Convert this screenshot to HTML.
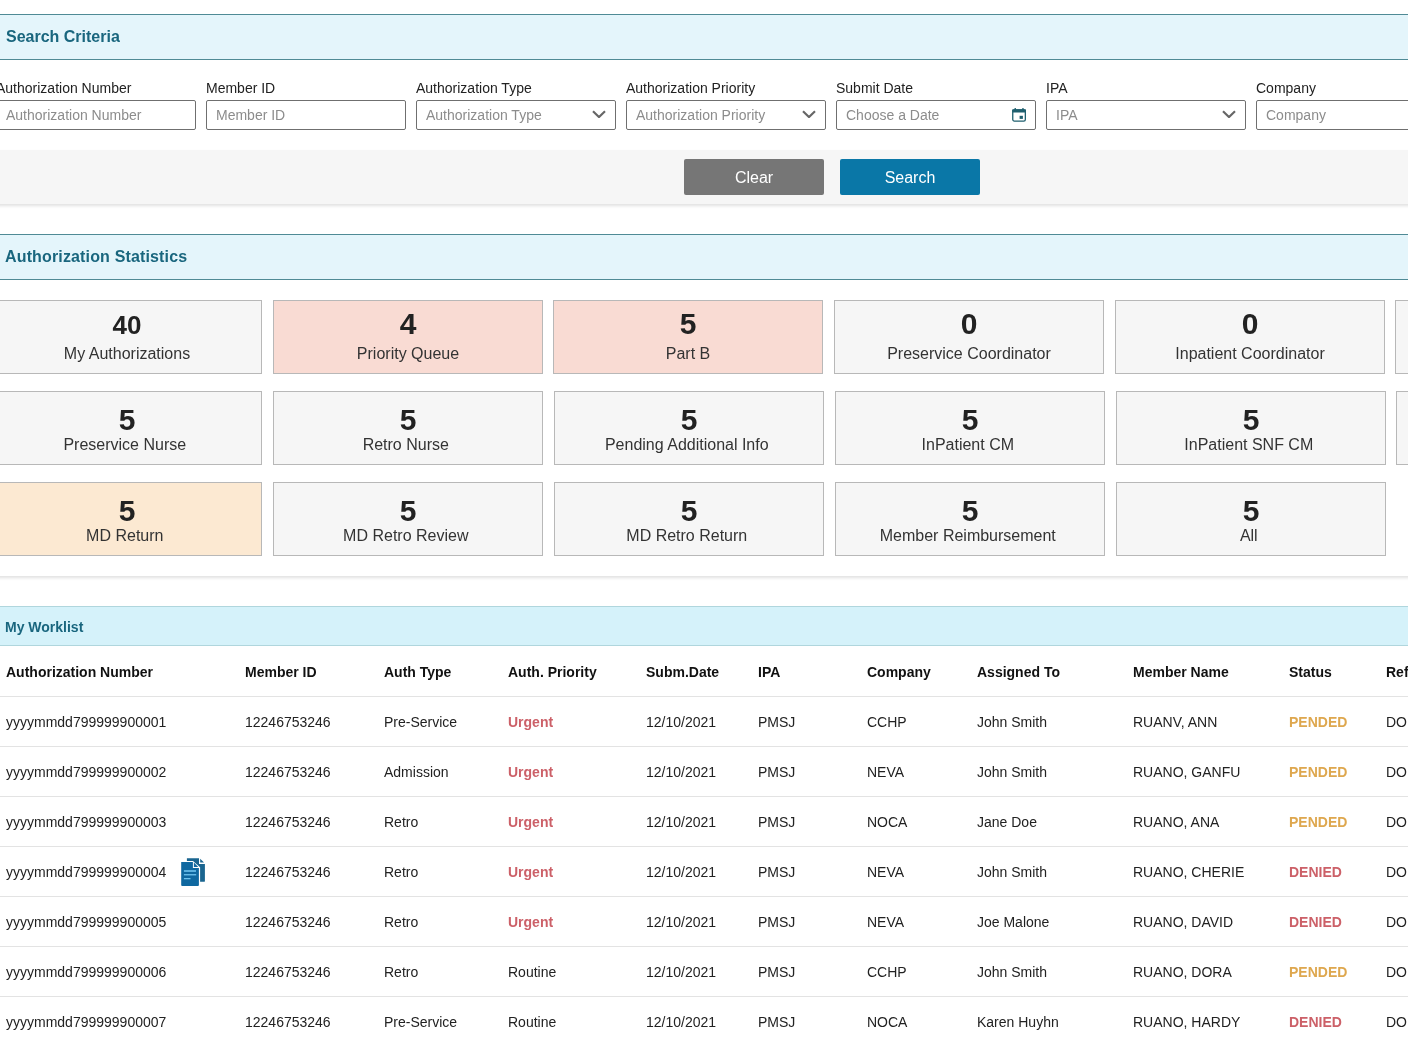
<!DOCTYPE html><html><head><meta charset="utf-8"><title>Authorizations</title><style>

html,body{margin:0;padding:0;width:1408px;height:1041px;overflow:hidden;background:#fff;font-family:"Liberation Sans", sans-serif;}
.abs{position:absolute;white-space:nowrap;}
.hdr{position:absolute;left:-10px;width:1430px;box-sizing:border-box;}
.h1{top:14px;height:46px;background:#e4f5fb;border-top:1px solid #4f8a95;border-bottom:1px solid #4f8a95;}
.h2{top:234px;height:46px;background:#e4f5fb;border-top:1px solid #4f8a95;border-bottom:1px solid #4f8a95;}
.h3{top:606px;height:40px;background:#d5f2fa;border-top:1px solid #b0d6dd;border-bottom:1px solid #b0d6dd;}
.htxt{color:#19667e;font-weight:bold;}
.lbl{font-size:14px;line-height:16px;color:#222;}
.inp{position:absolute;top:100px;width:200px;height:30px;box-sizing:border-box;border:1px solid #6f6f6f;border-radius:2px;background:#fff;}
.ph{position:absolute;left:9px;top:6px;font-size:14px;line-height:16px;color:#8c8c8c;white-space:nowrap;}
.band{position:absolute;left:-10px;width:1430px;top:150px;height:54px;background:#f6f6f6;box-shadow:0 2px 3px rgba(0,0,0,0.12);}
.btn{position:absolute;top:159px;width:140px;height:36px;border-radius:2px;color:#fff;font-size:16px;line-height:38px;text-align:center;}
.card{position:absolute;width:270px;height:74px;box-sizing:border-box;border:1px solid #b8b8b8;background:#f6f6f6;}
.num{position:absolute;left:0;width:100%;text-align:center;font-weight:bold;font-size:30px;line-height:30px;color:#222;}
.clbl{position:absolute;left:0;width:100%;text-align:center;font-size:16px;line-height:18px;color:#333;white-space:pre;}
.th{position:absolute;top:664px;font-size:14px;line-height:16px;font-weight:bold;color:#111;white-space:nowrap;}
.td{position:absolute;font-size:14px;line-height:16px;color:#222;white-space:nowrap;}
.line{position:absolute;left:-10px;width:1430px;height:1px;background:#e3e3e3;}
.red{color:#cc6068;font-weight:bold;}
.org{color:#dea74e;font-weight:bold;}

</style></head><body><div id="wrap" style="position:absolute;left:0;top:0;width:1408px;height:1041px;overflow:hidden;will-change:transform;">
<div class="hdr h1"></div>
<div class="abs htxt" style="left:6px;top:28px;font-size:16px;line-height:18px;">Search Criteria</div>
<div class="abs lbl" style="left:-4px;top:80px;">Authorization Number</div>
<div class="inp" style="left:-4px;"><div class="ph">Authorization Number</div></div>
<div class="abs lbl" style="left:206px;top:80px;">Member ID</div>
<div class="inp" style="left:206px;"><div class="ph">Member ID</div></div>
<div class="abs lbl" style="left:416px;top:80px;">Authorization Type</div>
<div class="inp" style="left:416px;"><div class="ph">Authorization Type</div><svg class="abs" style="left:175px;top:7px" width="16" height="10" viewBox="0 0 16 10"><path d="M1.0 3.2 L7 9.1 L13 3.2" fill="none" stroke="#666" stroke-width="2.1" stroke-linecap="butt"/></svg></div>
<div class="abs lbl" style="left:626px;top:80px;">Authorization Priority</div>
<div class="inp" style="left:626px;"><div class="ph">Authorization Priority</div><svg class="abs" style="left:175px;top:7px" width="16" height="10" viewBox="0 0 16 10"><path d="M1.0 3.2 L7 9.1 L13 3.2" fill="none" stroke="#666" stroke-width="2.1" stroke-linecap="butt"/></svg></div>
<div class="abs lbl" style="left:836px;top:80px;">Submit Date</div>
<div class="inp" style="left:836px;"><div class="ph">Choose a Date</div><svg class="abs" style="left:174px;top:7px" width="16" height="16" viewBox="0 0 16 16"><rect x="1.75" y="1.9" width="12.6" height="11.15" rx="1.6" fill="none" stroke="#1f5f6e" stroke-width="1.3"/><rect x="1.1" y="1.2" width="13.9" height="3.2" rx="0.8" fill="#1f5f6e"/><rect x="3.5" y="0.1" width="1.5" height="2" fill="#1f5f6e"/><rect x="11.2" y="0.1" width="1.5" height="2" fill="#1f5f6e"/><rect x="8.6" y="7.8" width="3.3" height="3.1" fill="#1f5f6e"/></svg></div>
<div class="abs lbl" style="left:1046px;top:80px;">IPA</div>
<div class="inp" style="left:1046px;"><div class="ph">IPA</div><svg class="abs" style="left:175px;top:7px" width="16" height="10" viewBox="0 0 16 10"><path d="M1.0 3.2 L7 9.1 L13 3.2" fill="none" stroke="#666" stroke-width="2.1" stroke-linecap="butt"/></svg></div>
<div class="abs lbl" style="left:1256px;top:80px;">Company</div>
<div class="inp" style="left:1256px;"><div class="ph">Company</div></div>
<div class="band"></div>
<div class="btn" style="left:684px;background:#767676;">Clear</div>
<div class="btn" style="left:840px;background:#0a77a7;">Search</div>
<div class="band" style="top:280px;height:296px;background:#fff;"></div>
<div class="hdr h2"></div>
<div class="abs htxt" style="left:5px;top:248px;font-size:16px;line-height:18px;letter-spacing:0.15px;">Authorization Statistics</div>
<div class="card" style="left:-8px;top:300px;background:#f6f6f6;"><div class="num" style="top:11px;font-size:26px;line-height:26px;">40</div><div class="clbl" style="top:44px;">My Authorizations</div></div>
<div class="card" style="left:273px;top:300px;background:#f9dbd3;"><div class="num" style="top:8px;">4</div><div class="clbl" style="top:44px;">Priority Queue</div></div>
<div class="card" style="left:553px;top:300px;background:#f9dbd3;"><div class="num" style="top:8px;">5</div><div class="clbl" style="top:44px;">Part B</div></div>
<div class="card" style="left:834px;top:300px;background:#f6f6f6;"><div class="num" style="top:8px;">0</div><div class="clbl" style="top:44px;">Preservice Coordinator</div></div>
<div class="card" style="left:1115px;top:300px;background:#f6f6f6;"><div class="num" style="top:8px;">0</div><div class="clbl" style="top:44px;">Inpatient Coordinator</div></div>
<div class="card" style="left:1395px;top:300px;background:#f6f6f6;"><div class="num" style="top:8px;"></div><div class="clbl" style="top:44px;"></div></div>
<div class="card" style="left:-8px;top:391px;background:#f6f6f6;"><div class="num" style="top:13px;">5</div><div class="clbl" style="top:44px;">Preservice Nurse </div></div>
<div class="card" style="left:273px;top:391px;background:#f6f6f6;"><div class="num" style="top:13px;">5</div><div class="clbl" style="top:44px;">Retro Nurse </div></div>
<div class="card" style="left:554px;top:391px;background:#f6f6f6;"><div class="num" style="top:13px;">5</div><div class="clbl" style="top:44px;">Pending Additional Info </div></div>
<div class="card" style="left:835px;top:391px;background:#f6f6f6;"><div class="num" style="top:13px;">5</div><div class="clbl" style="top:44px;">InPatient CM </div></div>
<div class="card" style="left:1116px;top:391px;background:#f6f6f6;"><div class="num" style="top:13px;">5</div><div class="clbl" style="top:44px;">InPatient SNF CM </div></div>
<div class="card" style="left:1396px;top:391px;background:#f6f6f6;"><div class="num" style="top:13px;"></div><div class="clbl" style="top:44px;"></div></div>
<div class="card" style="left:-8px;top:482px;background:#fce9d2;"><div class="num" style="top:13px;">5</div><div class="clbl" style="top:44px;">MD Return </div></div>
<div class="card" style="left:273px;top:482px;background:#f6f6f6;"><div class="num" style="top:13px;">5</div><div class="clbl" style="top:44px;">MD Retro Review </div></div>
<div class="card" style="left:554px;top:482px;background:#f6f6f6;"><div class="num" style="top:13px;">5</div><div class="clbl" style="top:44px;">MD Retro Return </div></div>
<div class="card" style="left:835px;top:482px;background:#f6f6f6;"><div class="num" style="top:13px;">5</div><div class="clbl" style="top:44px;">Member Reimbursement </div></div>
<div class="card" style="left:1116px;top:482px;background:#f6f6f6;"><div class="num" style="top:13px;">5</div><div class="clbl" style="top:44px;">All </div></div>
<div class="hdr h3"></div>
<div class="abs htxt" style="left:5px;top:619px;font-size:14px;line-height:16px;">My Worklist</div>
<div class="th" style="left:6px;">Authorization Number</div>
<div class="th" style="left:245px;">Member ID</div>
<div class="th" style="left:384px;">Auth Type</div>
<div class="th" style="left:508px;">Auth. Priority</div>
<div class="th" style="left:646px;">Subm.Date</div>
<div class="th" style="left:758px;">IPA</div>
<div class="th" style="left:867px;">Company</div>
<div class="th" style="left:977px;">Assigned To</div>
<div class="th" style="left:1133px;">Member Name</div>
<div class="th" style="left:1289px;">Status</div>
<div class="th" style="left:1386px;">Ref</div>
<div class="line" style="top:696px;"></div>
<div class="line" style="top:746px;"></div>
<div class="line" style="top:796px;"></div>
<div class="line" style="top:846px;"></div>
<div class="line" style="top:896px;"></div>
<div class="line" style="top:946px;"></div>
<div class="line" style="top:996px;"></div>
<div class="td" style="left:6px;top:714px;">yyyymmdd799999900001</div>
<div class="td" style="left:245px;top:714px;">12246753246</div>
<div class="td" style="left:384px;top:714px;">Pre-Service</div>
<div class="td red" style="left:508px;top:714px;">Urgent</div>
<div class="td" style="left:646px;top:714px;">12/10/2021</div>
<div class="td" style="left:758px;top:714px;">PMSJ</div>
<div class="td" style="left:867px;top:714px;">CCHP</div>
<div class="td" style="left:977px;top:714px;">John Smith</div>
<div class="td" style="left:1133px;top:714px;">RUANV, ANN</div>
<div class="td org" style="left:1289px;top:714px;">PENDED</div>
<div class="td" style="left:1386px;top:714px;">DO</div>
<div class="td" style="left:6px;top:764px;">yyyymmdd799999900002</div>
<div class="td" style="left:245px;top:764px;">12246753246</div>
<div class="td" style="left:384px;top:764px;">Admission</div>
<div class="td red" style="left:508px;top:764px;">Urgent</div>
<div class="td" style="left:646px;top:764px;">12/10/2021</div>
<div class="td" style="left:758px;top:764px;">PMSJ</div>
<div class="td" style="left:867px;top:764px;">NEVA</div>
<div class="td" style="left:977px;top:764px;">John Smith</div>
<div class="td" style="left:1133px;top:764px;">RUANO, GANFU</div>
<div class="td org" style="left:1289px;top:764px;">PENDED</div>
<div class="td" style="left:1386px;top:764px;">DO</div>
<div class="td" style="left:6px;top:814px;">yyyymmdd799999900003</div>
<div class="td" style="left:245px;top:814px;">12246753246</div>
<div class="td" style="left:384px;top:814px;">Retro</div>
<div class="td red" style="left:508px;top:814px;">Urgent</div>
<div class="td" style="left:646px;top:814px;">12/10/2021</div>
<div class="td" style="left:758px;top:814px;">PMSJ</div>
<div class="td" style="left:867px;top:814px;">NOCA</div>
<div class="td" style="left:977px;top:814px;">Jane Doe</div>
<div class="td" style="left:1133px;top:814px;">RUANO, ANA</div>
<div class="td org" style="left:1289px;top:814px;">PENDED</div>
<div class="td" style="left:1386px;top:814px;">DO</div>
<div class="td" style="left:6px;top:864px;">yyyymmdd799999900004</div>
<div class="td" style="left:245px;top:864px;">12246753246</div>
<div class="td" style="left:384px;top:864px;">Retro</div>
<div class="td red" style="left:508px;top:864px;">Urgent</div>
<div class="td" style="left:646px;top:864px;">12/10/2021</div>
<div class="td" style="left:758px;top:864px;">PMSJ</div>
<div class="td" style="left:867px;top:864px;">NEVA</div>
<div class="td" style="left:977px;top:864px;">John Smith</div>
<div class="td" style="left:1133px;top:864px;">RUANO, CHERIE</div>
<div class="td red" style="left:1289px;top:864px;">DENIED</div>
<div class="td" style="left:1386px;top:864px;">DO</div>
<div class="td" style="left:6px;top:914px;">yyyymmdd799999900005</div>
<div class="td" style="left:245px;top:914px;">12246753246</div>
<div class="td" style="left:384px;top:914px;">Retro</div>
<div class="td red" style="left:508px;top:914px;">Urgent</div>
<div class="td" style="left:646px;top:914px;">12/10/2021</div>
<div class="td" style="left:758px;top:914px;">PMSJ</div>
<div class="td" style="left:867px;top:914px;">NEVA</div>
<div class="td" style="left:977px;top:914px;">Joe Malone</div>
<div class="td" style="left:1133px;top:914px;">RUANO, DAVID</div>
<div class="td red" style="left:1289px;top:914px;">DENIED</div>
<div class="td" style="left:1386px;top:914px;">DO</div>
<div class="td" style="left:6px;top:964px;">yyyymmdd799999900006</div>
<div class="td" style="left:245px;top:964px;">12246753246</div>
<div class="td" style="left:384px;top:964px;">Retro</div>
<div class="td" style="left:508px;top:964px;">Routine</div>
<div class="td" style="left:646px;top:964px;">12/10/2021</div>
<div class="td" style="left:758px;top:964px;">PMSJ</div>
<div class="td" style="left:867px;top:964px;">CCHP</div>
<div class="td" style="left:977px;top:964px;">John Smith</div>
<div class="td" style="left:1133px;top:964px;">RUANO, DORA</div>
<div class="td org" style="left:1289px;top:964px;">PENDED</div>
<div class="td" style="left:1386px;top:964px;">DO</div>
<div class="td" style="left:6px;top:1014px;">yyyymmdd799999900007</div>
<div class="td" style="left:245px;top:1014px;">12246753246</div>
<div class="td" style="left:384px;top:1014px;">Pre-Service</div>
<div class="td" style="left:508px;top:1014px;">Routine</div>
<div class="td" style="left:646px;top:1014px;">12/10/2021</div>
<div class="td" style="left:758px;top:1014px;">PMSJ</div>
<div class="td" style="left:867px;top:1014px;">NOCA</div>
<div class="td" style="left:977px;top:1014px;">Karen Huyhn</div>
<div class="td" style="left:1133px;top:1014px;">RUANO, HARDY</div>
<div class="td red" style="left:1289px;top:1014px;">DENIED</div>
<div class="td" style="left:1386px;top:1014px;">DO</div>
<svg class="abs" style="left:180px;top:857px" width="26" height="30" viewBox="0 0 26 30">
<path d="M6.9 1.3 H19 V7.1 H24.9 V23.9 Q24.9 24.8 24 24.8 H6.9 Z" fill="#1a6590"/>
<path d="M20.2 1.8 V5.6 H24 Z" fill="#1a6590"/>
<path d="M0 3.9 H13 L20.1 10.2 V29.9 H0 Z" fill="#ffffff"/>
<path d="M1.2 4.9 H12.9 V10.9 H18.9 V28 Q18.9 28.9 18 28.9 H2.1 Q1.2 28.9 1.2 28 Z" fill="#0f68a0"/>
<path d="M13.9 5.6 V9.9 H18.2 Z" fill="#0f68a0"/>
<rect x="3.9" y="13.2" width="12.1" height="1.6" fill="#6fc3ee"/>
<rect x="3.9" y="17.1" width="12.3" height="1.3" fill="#6fc3ee"/>
<rect x="3.9" y="21" width="6.6" height="1.3" fill="#6fc3ee"/>
</svg>
</div></body></html>
